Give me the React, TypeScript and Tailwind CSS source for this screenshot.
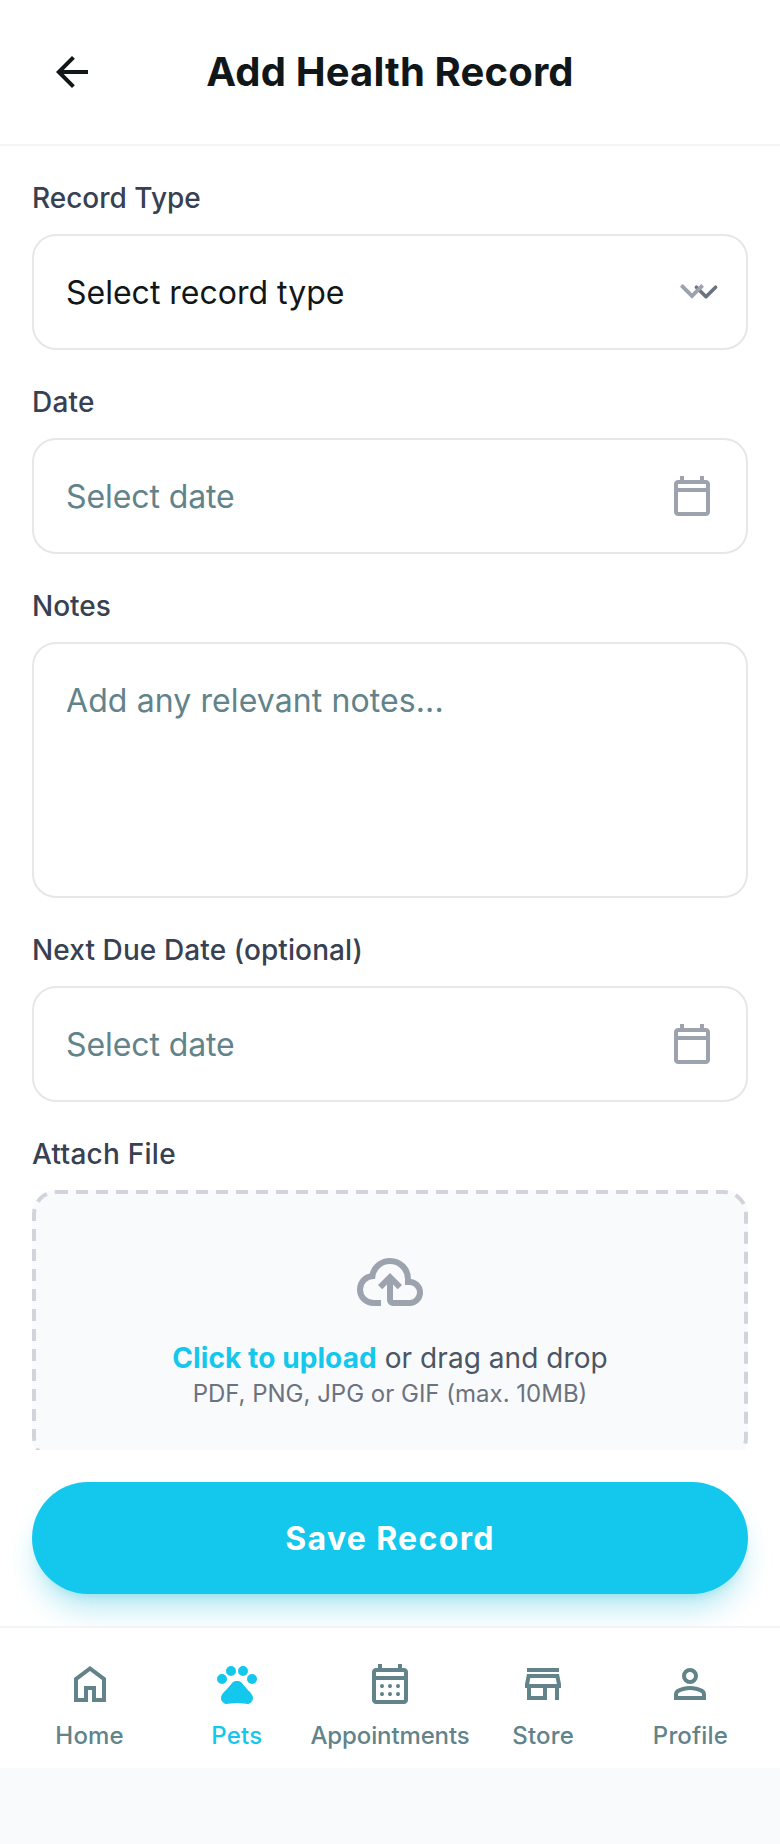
import React from "react";

type IconProps = { d: string; className?: string };

const Icon = ({ d, className = "size-12" }: IconProps) => (
  <svg viewBox="0 0 24 24" fill="currentColor" className={className} aria-hidden="true">
    <path d={d} />
  </svg>
);

const CALENDAR =
  "M5 22q-.825 0-1.4125-.5875T3 20V6q0-.825.5875-1.4125T5 4h1V2h2v2h8V2h2v2h1q.825 0 1.4125.5875T21 6v14q0 .825-.5875 1.4125T19 22zm0-2h14V10H5zM5 8h14V6H5z";

const icons = {
  back: "M7.825 13l5.6 5.6L12 20l-8-8 8-8 1.425 1.4L7.825 11H20v2z",
  chevron: "M12 15.4l-6-6L7.4 8l4.6 4.6L16.6 8 18 9.4z",
  calendar: CALENDAR,
  calendarMonth:
    CALENDAR +
    "M12 14q-.425 0-.7125-.2875T11 13t.2875-.7125T12 12t.7125.2875T13 13t-.2875.7125T12 14m-4 0q-.425 0-.7125-.2875T7 13t.2875-.7125T8 12t.7125.2875T9 13t-.2875.7125T8 14m8 0q-.425 0-.7125-.2875T15 13t.2875-.7125T16 12t.7125.2875T17 13t-.2875.7125T16 14m-4 4q-.425 0-.7125-.2875T11 17t.2875-.7125T12 16t.7125.2875T13 17t-.2875.7125T12 18m-4 0q-.425 0-.7125-.2875T7 17t.2875-.7125T8 16t.7125.2875T9 17t-.2875.7125T8 18m8 0q-.425 0-.7125-.2875T15 17t.2875-.7125T16 16t.7125.2875T17 17t-.2875.7125T16 18",
  cloudUpload:
    "M6.5 20q-2.275 0-3.8875-1.575T1 14.575q0-1.95 1.175-3.475T5.25 9.15q.625-2.3 2.5-3.725T12 4q2.925 0 4.9625 2.0375T19 11q1.725.2 2.8625 1.4875T23 15.5q0 1.875-1.3125 3.1875T18.5 20H13q-.825 0-1.4125-.5875T11 18v-5.15l-1.6 1.55L8 13l4-4 4 4-1.4 1.4-1.6-1.55V18h5.5q1.05 0 1.775-.725T21 15.5t-.725-1.775T18.5 13H17v-2q0-2.075-1.4625-3.5375T12 6 8.4625 7.4625 7 11h-.5q-1.45 0-2.475 1.025T3 14.5t1.025 2.475T6.5 18H9v2z",
  home: "M6 19h3v-6h6v6h3v-9l-6-4.5L6 10zm-2 2V9l8-6 8 6v12h-7v-6h-2v6z",
  pets: "M4.5 12a2.5 2.5 0 1 1 0-5 2.5 2.5 0 0 1 0 5M9 8a2.5 2.5 0 1 1 0-5 2.5 2.5 0 0 1 0 5m6 0a2.5 2.5 0 1 1 0-5 2.5 2.5 0 0 1 0 5m4.5 4a2.5 2.5 0 1 1 0-5 2.5 2.5 0 0 1 0 5M17.34 14.86c-.87-1.02-1.6-1.89-2.48-2.91-.46-.54-1.05-1.08-1.75-1.32-.11-.04-.22-.07-.33-.09-.25-.04-.52-.04-.78-.04s-.53 0-.79.05c-.11.02-.22.05-.33.09-.7.24-1.28.78-1.75 1.32-.87 1.02-1.6 1.89-2.48 2.91-1.31 1.31-2.92 2.76-2.62 4.79.29 1.02 1.02 2.03 2.33 2.32.73.15 3.06-.44 5.54-.44h.18c2.48 0 4.81.58 5.54.44 1.31-.29 2.04-1.31 2.33-2.32.31-2.04-1.3-3.49-2.61-4.8z",
  store:
    "M4 6V4h16v2zm0 14v-6H3v-2l1-5h16l1 5v2h-1v6h-2v-6h-4v6zm2-2h6v-4H6zm-.95-6h13.9l-.6-3H5.65z",
  person:
    "M12 12q-1.65 0-2.825-1.175T8 8t1.175-2.825T12 4t2.825 1.175T16 8t-1.175 2.825T12 12m-8 8v-2.8q0-.85.4375-1.5625T5.6 14.55q1.55-.775 3.15-1.1625T12 13t3.25.3875 3.15 1.1625q.725.375 1.1625 1.0875T20 17.2V20zm2-2h12v-.8q0-.275-.1375-.5T17.5 16.35q-1.35-.675-2.725-1.0125T12 15t-2.775.3375T6.5 16.35q-.225.125-.3625.35T6 17.2zm6-8q.825 0 1.4125-.5875T14 8t-.5875-1.4125T12 6t-1.4125.5875T10 8t.5875 1.4125T12 10",
};

const control =
  "block w-full appearance-none rounded-3xl border-2 border-[#e5e7eb] bg-white px-8 pt-[33px] pb-[31px] text-[32px] leading-[48px] text-[#111718] outline-none placeholder:text-[#618389] placeholder:opacity-100";

type FieldProps = { label: string; tracking?: string; children: React.ReactNode };

const Field = ({ label, tracking = "", children }: FieldProps) => (
  <div className="flex flex-col gap-4">
    <span className={`text-[28px] font-medium leading-10 text-[#374151] ${tracking}`}>{label}</span>
    {children}
  </div>
);

const DateInput = () => (
  <div className="relative">
    <input type="text" placeholder="Select date" className={`${control} tracking-[-0.1px]`} />
    <div className="pointer-events-none absolute inset-y-0 right-8 flex items-center text-[#9ca3af]">
      <Icon d={icons.calendar} />
    </div>
  </div>
);

const tabs = [
  { label: "Home", icon: icons.home, active: false, tracking: "tracking-[0.2px]" },
  { label: "Pets", icon: icons.pets, active: true, tracking: "tracking-[0.2px]" },
  { label: "Appointments", icon: icons.calendarMonth, active: false, tracking: "tracking-[-0.12px]" },
  { label: "Store", icon: icons.store, active: false, tracking: "tracking-[0.2px]" },
  { label: "Profile", icon: icons.person, active: false, tracking: "tracking-[0.15px]" },
];

export default function App() {
  return (
    <div className="h-[1844px] w-full bg-[#f9fafb] font-['Inter',sans-serif]">
      <div className="flex h-[1768px] flex-col overflow-hidden bg-white">
        <header className="flex shrink-0 items-center border-b-2 border-[#f3f4f6] p-8">
          <button className="flex size-20 items-center justify-center text-[#111718]">
            <Icon d={icons.back} />
          </button>
          <h1 className="flex-1 pr-20 text-center text-[40px] font-bold leading-[50px] tracking-[0.15px] text-[#111718]">
            Add Health Record
          </h1>
        </header>

        <main className="flex min-h-0 flex-1 flex-col gap-8 overflow-hidden p-8 pb-0">
          <Field label="Record Type">
            <div className="relative">
              <select className={control}>
                <option>Select record type</option>
              </select>
              <svg
                viewBox="0 0 20 20"
                fill="none"
                stroke="#6b7280"
                strokeWidth="1.5"
                strokeLinecap="round"
                strokeLinejoin="round"
                className="pointer-events-none absolute right-[18px] top-[34px] size-12"
              >
                <path d="M6 8l4 4 4-4" />
              </svg>
              <div className="pointer-events-none absolute inset-y-0 right-8 flex items-center text-[#9ca3af]">
                <Icon d={icons.chevron} />
              </div>
            </div>
          </Field>
          <Field label="Date" tracking="tracking-[0.2px]">
            <DateInput />
          </Field>
          <Field label="Notes">
            <textarea
              placeholder="Add any relevant notes..."
              className={`${control} h-64 resize-none tracking-[0.1px]`}
            />
          </Field>
          <Field label="Next Due Date (optional)" tracking="tracking-[0.1px]">
            <DateInput />
          </Field>
          <Field label="Attach File" tracking="tracking-[0.25px]">
            <div className="relative flex h-[272px] shrink-0 flex-col items-center rounded-3xl bg-[#f9fafb] py-[52px]">
              {/* dashed outline drawn at half size and doubled, for long dashes */}
              <div className="pointer-events-none absolute left-0 top-0 h-1/2 w-1/2 origin-top-left scale-200 rounded-xl border-2 border-dashed border-[#d1d5db]" />
              <div className="mb-4 flex h-20 items-center text-[#9ca3af]">
                <Icon d={icons.cloudUpload} className="size-[72px]" />
              </div>
              <p className="text-[28px] leading-10 tracking-[0.06px] text-[#4b5563]">
                <span className="font-bold tracking-[0.1px] text-[#13c8ec]">Click to upload</span> or drag and drop
              </p>
              <p className="text-2xl leading-8 text-[#6b7280]">PDF, PNG, JPG or GIF (max. 10MB)</p>
            </div>
          </Field>
        </main>

        <div className="relative shrink-0 bg-white p-8">
          <button className="block h-28 w-full rounded-full bg-[#13c8ec] pt-[2px] text-[32px] font-bold leading-[48px] tracking-[1.33px] text-white shadow-[0_20px_30px_-6px_rgba(6,182,212,0.3),0_8px_12px_-8px_rgba(6,182,212,0.3)]">
            Save Record
          </button>
        </div>

        <nav className="relative flex shrink-0 border-t-2 border-[#f3f4f6] bg-white px-4 pb-4 pt-8">
          {tabs.map((t) => (
            <a
              key={t.label}
              className={`flex flex-1 flex-col items-center gap-3 ${t.active ? "text-[#13c8ec]" : "text-[#618389]"}`}
            >
              <Icon d={t.icon} />
              <span className={`text-2xl font-medium leading-8 ${t.tracking}`}>{t.label}</span>
            </a>
          ))}
        </nav>
      </div>
    </div>
  );
}
